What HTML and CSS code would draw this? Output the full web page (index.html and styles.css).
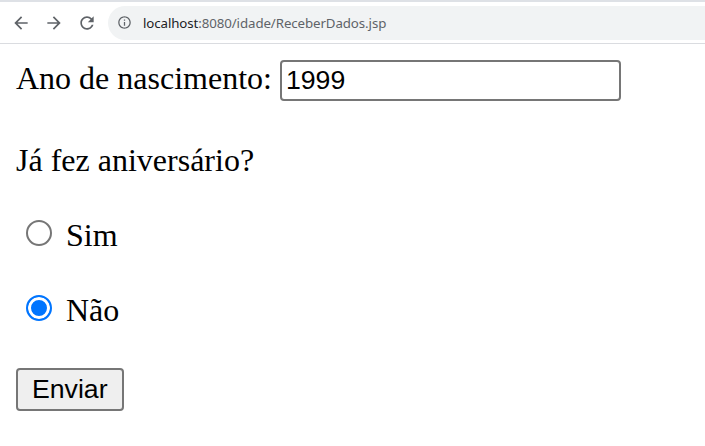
FILE: index.html
```html
<!DOCTYPE html>
<html lang="pt">
<head>
<meta charset="utf-8">
<title>ReceberDados</title>
<link rel="stylesheet" href="styles.css">
</head>
<body>
<header class="toolbar">
  <div class="nav">
    <svg class="nav-icon" viewBox="0 0 24 24"><path d="M20 11H7.83l5.59-5.59L12 4l-8 8 8 8 1.41-1.41L7.83 13H20v-2z"/></svg>
    <svg class="nav-icon" viewBox="0 0 24 24"><path d="M4 11h12.17l-5.59-5.59L12 4l8 8-8 8-1.41-1.41L16.17 13H4v-2z"/></svg>
    <svg class="nav-icon" viewBox="0 0 24 24"><path d="M17.65 6.35C16.2 4.9 14.21 4 12 4c-4.42 0-7.99 3.58-7.99 8s3.57 8 7.99 8c3.73 0 6.84-2.55 7.73-6h-2.08c-.82 2.33-3.04 4-5.65 4-3.31 0-6-2.69-6-6s2.69-6 6-6c1.66 0 3.14.69 4.22 1.78L13 11h7V4l-2.35 2.35z"/></svg>
  </div>
  <div class="omnibox">
    <svg class="info-icon" viewBox="0 0 24 24"><path d="M11 7h2v2h-2zm0 4h2v6h-2zm1-9C6.48 2 2 6.48 2 12s4.48 10 10 10 10-4.480 10-10S17.52 2 12 2zm0 18c-4.41 0-8-3.59-8-8s3.59-8 8-8 8 3.59 8 8-3.59 8-8 8z"/></svg>
    <span class="url"><span class="host">localhost</span><span class="path">:8080/idade/ReceberDados.jsp</span></span>
  </div>
</header>
<main class="page">
  <form class="form">
    <div class="field">Ano de nascimento: <input type="text" class="text-input" value="1999"></div>
    <p class="question">Já fez aniversário?</p>
    <p class="option"><input type="radio" name="aniv" class="radio"> Sim</p>
    <p class="option"><input type="radio" name="aniv" class="radio" checked> Não</p>
    <input type="submit" class="submit" value="Enviar">
  </form>
</main>
</body>
</html>
```
FILE: styles.css
```css
html, body {
  margin: 0;
  background: #ffffff;
}

body {
  font-family: "Liberation Serif", "Times New Roman", serif;
  color: #000;
}

.toolbar {
  display: flex;
  align-items: center;
  height: 41px;
  border-top: 2px solid #dee1e6;
  border-bottom: 1px solid #dadce0;
  background: #ffffff;
}

.nav {
  display: flex;
  align-items: center;
  gap: 13px;
  padding-left: 11px;
}

.nav-icon {
  width: 20px;
  height: 20px;
  fill: #5f6368;
  display: block;
}

.omnibox {
  flex: 1;
  display: flex;
  align-items: center;
  height: 34px;
  margin-left: 11px;
  padding-left: 9px;
  border-radius: 17px 0 0 17px;
  background: #f1f3f4;
}

.info-icon {
  width: 15px;
  height: 15px;
  fill: #5f6368;
  display: block;
}

.url {
  margin-left: 11px;
  font-family: "Noto Sans", "Open Sans", sans-serif;
  font-size: 13.3px;
  letter-spacing: -0.1px;
}

.host {
  color: #202124;
}

.path {
  color: #5f6368;
}

.page {
  padding: 16px;
  font-size: 32px;
}

.form {
  margin: 0;
}

.field {
  line-height: 1.15;
}

.text-input {
  box-sizing: border-box;
  width: 341px;
  height: 41px;
  padding: 2px 4px;
  border: 2px solid #767676;
  border-radius: 4px;
  font-family: "Liberation Sans", Arial, sans-serif;
  font-size: 26.67px;
  color: #000;
  background: #fff;
  outline: none;
}

.question {
  margin: 41px 0 35px;
}

.option {
  margin: 35px 0;
}

.radio {
  appearance: none;
  -webkit-appearance: none;
  box-sizing: border-box;
  width: 26px;
  height: 26px;
  margin: 6px 6px 0 10px;
  border: 2px solid #767676;
  border-radius: 50%;
  background: #fff;
}

.radio:checked {
  border-color: #0075ff;
  background: #0075ff;
  box-shadow: inset 0 0 0 3px #fff;
}

.submit {
  box-sizing: border-box;
  height: 43px;
  margin-top: 4px;
  padding: 2px 14px;
  border: 2px solid #767676;
  border-radius: 4px;
  background: #efefef;
  font-family: "Liberation Sans", Arial, sans-serif;
  font-size: 26.67px;
  color: #000;
}
```
